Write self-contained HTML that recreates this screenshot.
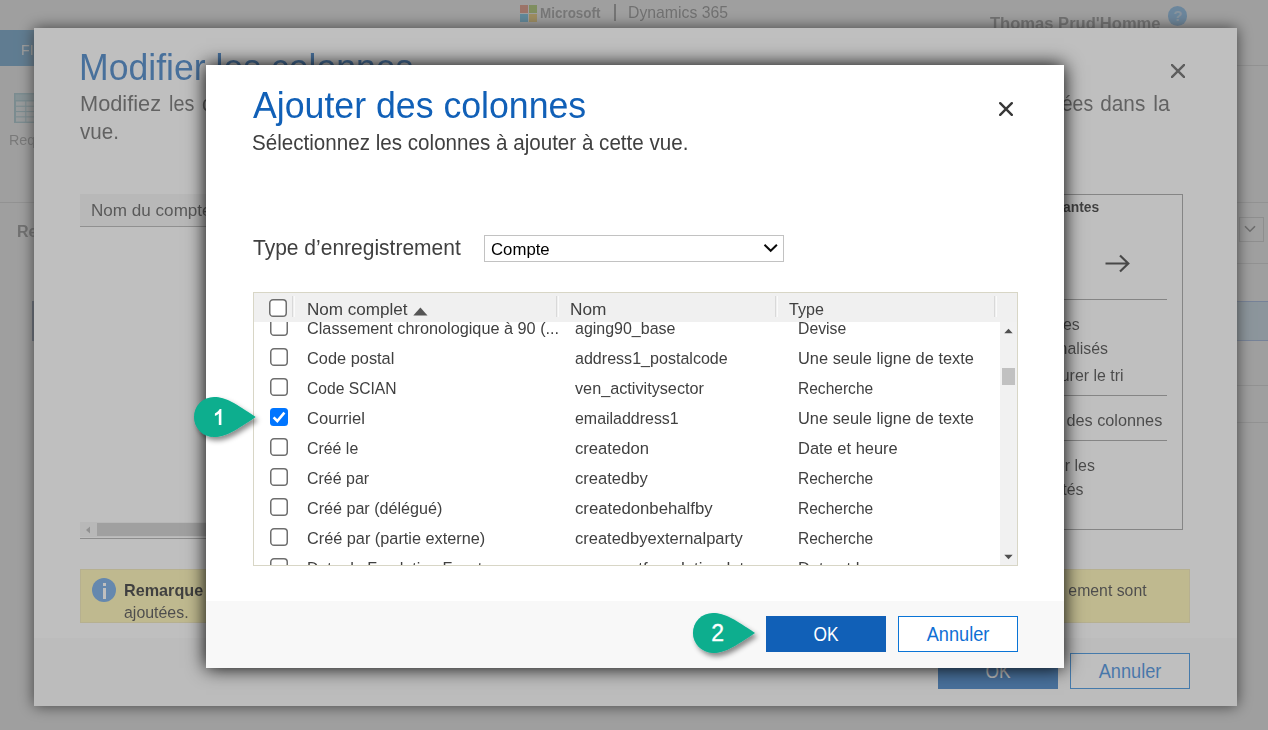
<!DOCTYPE html>
<html lang="fr"><head><meta charset="utf-8"><title>Ajouter des colonnes</title>
<style>
*{margin:0;padding:0;box-sizing:border-box}
html,body{width:1268px;height:730px;overflow:hidden;background:#fff}
body{position:relative;font-family:"Liberation Sans",sans-serif;}
.a{position:absolute}
.t{position:absolute;white-space:nowrap;line-height:1;font-family:"Liberation Sans",sans-serif}
.ov{position:absolute;left:0;top:0;width:1268px;height:730px;background:rgba(128,128,128,.5)}
.ln{position:absolute;height:1px;background:#c8c8c8}
#m1{position:absolute;left:34px;top:28px;width:1203px;height:677.5px;background:#fff;box-shadow:0 0 14px rgba(0,0,0,1)}
#m2{position:absolute;left:206px;top:65px;width:858px;height:602.8px;background:#fff;box-shadow:0 0 18px rgba(0,0,0,1)}
.ft{position:absolute;left:0;bottom:0;width:100%;background:#f8f8f8}
.cb{position:absolute;width:18px;height:18px;border:1.4px solid #767676;border-radius:3.5px;background:#fff}
.cb.on{border:none;background:#0075ff}
.cb svg{display:block}
.btn{position:absolute;height:36px;width:120px}
.btn.p{background:#1160b7}
.btn.s{background:#fff;border:1px solid #0a74d6}
.sep{position:absolute;width:3px;border-left:1px solid #d9d9d9;border-right:1px solid #fafafa;top:296px;height:21px}

</style></head>
<body>
<!-- ================= base page ================= -->
<div id="page">
  <div class="a" style="left:520px;top:4.5px;width:8px;height:8px;background:#f25022"></div>
  <div class="a" style="left:529px;top:4.5px;width:8px;height:8px;background:#7fba00"></div>
  <div class="a" style="left:520px;top:13.5px;width:8px;height:8px;background:#00a4ef"></div>
  <div class="a" style="left:529px;top:13.5px;width:8px;height:8px;background:#ffb900"></div>
  <div class="a" style="left:614px;top:4px;width:1.6px;height:17px;background:#555"></div>
  <div class="a" style="left:1168.2px;top:6.4px;width:19.2px;height:19.2px;border-radius:50%;background:#2f9bf5;color:#9fd0fa;font-weight:700;font-size:15px;line-height:19.2px;text-align:center">?</div>
  <div class="a" style="left:0;top:30px;width:92px;height:36px;background:#0072c6"></div>
  <div class="ln" style="left:92px;top:65px;width:1176px"></div>
  <div class="ln" style="left:0;top:201.5px;width:1268px"></div>
  <svg class="a" style="left:13.5px;top:92.5px" width="34" height="30" viewBox="0 0 34 30"><rect x="0" y="0" width="34" height="30" fill="#6fb4c4"/><rect x="1.5" y="1.5" width="31" height="5.5" fill="#9ccfdb"/><rect x="2" y="8.5" width="9.3" height="4.2" fill="#e4f1f4"/><rect x="12.3" y="8.5" width="9.3" height="4.2" fill="#e4f1f4"/><rect x="22.6" y="8.5" width="9.3" height="4.2" fill="#e4f1f4"/><rect x="2" y="13.8" width="9.3" height="4.2" fill="#e4f1f4"/><rect x="12.3" y="13.8" width="9.3" height="4.2" fill="#e4f1f4"/><rect x="22.6" y="13.8" width="9.3" height="4.2" fill="#e4f1f4"/><rect x="2" y="19.1" width="9.3" height="4.2" fill="#e4f1f4"/><rect x="12.3" y="19.1" width="9.3" height="4.2" fill="#e4f1f4"/><rect x="22.6" y="19.1" width="9.3" height="4.2" fill="#e4f1f4"/><rect x="2" y="24.4" width="9.3" height="4.2" fill="#e4f1f4"/><rect x="12.3" y="24.4" width="9.3" height="4.2" fill="#e4f1f4"/><rect x="22.6" y="24.4" width="9.3" height="4.2" fill="#e4f1f4"/></svg>
  <div class="a" style="left:32px;top:301px;width:1236px;height:40px;background:#b1d6f0;border-top:1px solid #5a8ae0;border-bottom:1px solid #5a8ae0"></div>
  <div class="a" style="left:32px;top:301px;width:2px;height:39.6px;background:#1f3a6e"></div>
  <div class="a" style="left:1238.5px;top:216.5px;width:25px;height:25.3px;border:1px solid #bbb;background:#fff"></div>
  <svg class="a" style="left:1243.8px;top:225px" width="12" height="8" viewBox="0 0 12 8"><path d="M1 1.2L6 6.2L11 1.2" fill="none" stroke="#333" stroke-width="1.6"/></svg>
  <div class="ln" style="left:1200px;top:263px;width:68px"></div>
  <div class="ln" style="left:1200px;top:385px;width:68px"></div>
  <div class="ln" style="left:1200px;top:422px;width:68px"></div>
<span class="t" id="t0" style="top:4px;line-height:17px;font-size:15px;color:#5e5e5e;font-weight:700;left:540.06px;transform-origin:0 0;transform:scaleX(0.8960);">Microsoft</span>
<span class="t" id="t1" style="top:3px;line-height:19px;font-size:16.6px;color:#444;left:628.13px;transform-origin:0 0;transform:scaleX(0.9511);">Dynamics 365</span>
<span class="t" id="t2" style="top:13px;line-height:20px;font-size:17.4px;color:#444;font-weight:700;left:989.69px;transform-origin:0 0;transform:scaleX(0.9527);">Thomas Prud'Homme</span>
<span class="t" id="t3" style="top:41px;line-height:17px;font-size:15.5px;color:#fff;left:21.41px;transform-origin:0 0;transform:scaleX(0.9250);">FICHIER</span>
<span class="t" id="t4" style="top:131px;line-height:17px;font-size:15.5px;color:#666;left:9.21px;transform-origin:0 0;transform:scaleX(0.9250);">Requête</span>
<span class="t" id="t5" style="top:221px;line-height:20px;font-size:17.4px;color:#444;font-weight:700;left:16.51px;transform-origin:0 0;transform:scaleX(0.9250);">Requête</span>
</div>
<div class="ov"></div>

<!-- ================= modal 1 : Modifier les colonnes ================= -->
<div id="m1"><div class="ft" style="height:68px"></div></div>
<svg class="a" style="left:1171px;top:64px" width="14" height="14" viewBox="0 0 14 14"><path d="M0.8 0.8L13.2 13.2M13.2 0.8L0.8 13.2" stroke="#3c3c3c" stroke-width="2.4" stroke-linecap="round" fill="none"/></svg>
<div class="a" style="left:80px;top:194px;width:400px;height:32.5px;background:#f0f0f0;border-bottom:1px solid #a0a0a0"></div>
<div class="a" style="left:80px;top:521.5px;width:400px;height:15px;background:#f1f1f1"></div>
<div class="ln" style="left:80px;top:538px;width:400px;background:#9a9a9a"></div>
<div class="a" style="left:97px;top:523px;width:300px;height:13px;background:#c1c1c1"></div>
<svg class="a" style="left:84.5px;top:525.5px" width="6" height="8" viewBox="0 0 6 8"><path d="M5 0.5L1 4L5 7.5Z" fill="#a3a3a3"/></svg>
<div class="a" style="left:80px;top:569px;width:1110px;height:53.7px;background:#fff29e;border:1px solid #ece0a0"></div>
<div class="a" style="left:92px;top:578.4px;width:24px;height:24px;border-radius:50%;background:#4a90dc"></div>
<div class="a" style="left:102.5px;top:582.5px;width:3px;height:3.2px;background:#fff"></div>
<div class="a" style="left:102.5px;top:587.5px;width:3px;height:11px;background:#fff"></div>
<div class="a" style="left:900px;top:194.4px;width:283px;height:335.3px;border:1px solid #8a8a8a"></div>
<svg class="a" style="left:1104.5px;top:253.5px" width="25" height="19" viewBox="0 0 25 19"><path d="M0.5 9.5H23M15 1.5L23.3 9.5L15 17.5" fill="none" stroke="#111" stroke-width="2.2"/></svg>
<div class="ln" style="left:920px;top:299px;width:247px;background:#8a8a8a"></div>
<div class="ln" style="left:920px;top:395px;width:247px;background:#8a8a8a"></div>
<div class="ln" style="left:920px;top:440px;width:247px;background:#8a8a8a"></div>
<div class="btn p" style="left:938px;top:653px"></div>
<div class="btn s" style="left:1070px;top:653px"></div>
<span class="t" id="t6" style="top:46px;line-height:42px;font-size:37.8px;color:#1160b7;left:79.34px;transform-origin:0 0;transform:scaleX(0.9418);">Modifier les colonnes</span>
<span class="t" id="t7" style="top:91px;line-height:25px;font-size:21.8px;color:#444;left:80.00px;transform-origin:0 0;transform:scaleX(0.9987);">Modifiez</span>
<span class="t" id="t8" style="top:91px;line-height:25px;font-size:21.8px;color:#444;left:168.91px;transform-origin:0 0;transform:scaleX(0.9068);">les</span>
<span class="t" id="t9" style="top:91px;line-height:25px;font-size:21.8px;color:#444;left:202.19px;transform-origin:0 0;transform:scaleX(0.9250);">colonnes</span>
<span class="t" id="t10" style="top:91px;line-height:25px;font-size:21.8px;color:#444;right:175.02px;transform-origin:100% 0;transform:scaleX(0.8916);">ées</span>
<span class="t" id="t11" style="top:91px;line-height:25px;font-size:21.8px;color:#444;right:123.17px;transform-origin:100% 0;transform:scaleX(0.9514);">dans</span>
<span class="t" id="t12" style="top:91px;line-height:25px;font-size:21.8px;color:#444;right:98.45px;transform-origin:100% 0;transform:scaleX(0.9800);">la</span>
<span class="t" id="t13" style="top:119px;line-height:25px;font-size:21.8px;color:#444;left:79.67px;transform-origin:0 0;transform:scaleX(0.9455);">vue.</span>
<span class="t" id="t14" style="top:200px;line-height:20px;font-size:17.4px;color:#333;left:91.36px;transform-origin:0 0;transform:scaleX(0.9826);">Nom du compte</span>
<span class="t" id="t15" style="top:198px;line-height:17px;font-size:15px;color:#000;font-weight:700;right:168.85px;transform-origin:100% 0;transform:scaleX(0.9250);">antes</span>
<span class="t" id="t16" style="top:314px;line-height:20px;font-size:17.2px;color:#161616;right:188.36px;transform-origin:100% 0;transform:scaleX(0.9250);">Filtres</span>
<span class="t" id="t17" style="top:338px;line-height:20px;font-size:17.2px;color:#161616;right:159.96px;transform-origin:100% 0;transform:scaleX(0.9250);">personnalisés</span>
<span class="t" id="t18" style="top:365px;line-height:20px;font-size:17.2px;color:#161616;right:144.36px;transform-origin:100% 0;transform:scaleX(0.9250);">Configurer le tri</span>
<span class="t" id="t19" style="top:410px;line-height:20px;font-size:17.2px;color:#161616;right:105.25px;transform-origin:100% 0;transform:scaleX(0.9462);">des colonnes</span>
<span class="t" id="t20" style="top:455px;line-height:20px;font-size:17.2px;color:#161616;right:173.06px;transform-origin:100% 0;transform:scaleX(0.9250);">Modifier les</span>
<span class="t" id="t21" style="top:479px;line-height:20px;font-size:17.2px;color:#161616;right:184.36px;transform-origin:100% 0;transform:scaleX(0.9250);">propriétés</span>
<span class="t" id="t22" style="top:581px;line-height:19px;font-size:17.1px;color:#000;font-weight:700;left:124.11px;transform-origin:0 0;transform:scaleX(0.9477);">Remarque</span>
<span class="t" id="t23" style="top:581px;line-height:19px;font-size:17.1px;color:#1a1a1a;right:121.87px;transform-origin:100% 0;transform:scaleX(0.9250);">ement sont</span>
<span class="t" id="t24" style="top:603px;line-height:19px;font-size:17.1px;color:#1a1a1a;left:124.12px;transform-origin:0 0;transform:scaleX(0.9311);">ajoutées.</span>
<span class="t" id="t25" style="top:660px;line-height:22px;font-size:19.4px;color:#fff;left:997.70px;transform-origin:50% 0;transform:translateX(-50%) scaleX(0.8935);">OK</span>
<span class="t" id="t26" style="top:660px;line-height:22px;font-size:19.4px;color:#0f6fd4;left:1130.00px;transform-origin:50% 0;transform:translateX(-50%) scaleX(0.9385);">Annuler</span>
<div class="ov"></div>

<!-- ================= modal 2 : Ajouter des colonnes ================= -->
<div id="m2"><div class="ft" style="height:67.2px"></div></div>
<svg class="a" style="left:999px;top:102px" width="14" height="14" viewBox="0 0 14 14"><path d="M1.2 1.2L12.8 12.8M12.8 1.2L1.2 12.8" stroke="#383838" stroke-width="2.4" stroke-linecap="round" fill="none"/></svg>
<div class="a" style="left:484px;top:235px;width:300px;height:27px;border:1px solid #c2c2c2;background:#fff"></div>
<svg class="a" style="left:762.5px;top:243px" width="16" height="10" viewBox="0 0 16 10"><path d="M1.5 1.8L7.7 7.8L13.9 1.8" fill="none" stroke="#0a0a0a" stroke-width="2"/></svg>
<!-- grid -->
<div class="a" style="left:253px;top:292px;width:765px;height:274px;border:1px solid #d8d6c6;background:#fff"></div>
<div class="a" style="left:254px;top:293px;width:763px;height:29px;background:#f0f0f0"></div>
<div class="sep" style="left:292px"></div><div class="sep" style="left:556px"></div><div class="sep" style="left:774.5px"></div><div class="sep" style="left:994px"></div>
<svg class="a" style="left:413px;top:306.5px" width="15" height="9" viewBox="0 0 15 9"><path d="M0.3 8.6L7.4 0.6L14.5 8.6Z" fill="#555"/></svg>
<svg class="a" style="left:269px;top:299px" width="18" height="18" viewBox="0 0 18 18"><rect x="0.75" y="0.75" width="16.5" height="16.5" rx="3.3" fill="#fff" stroke="#6e6e6e" stroke-width="1.5"/></svg>
<div class="a" id="rows" style="left:254px;top:322px;width:746px;height:243px;overflow:hidden">
 <div class="a" style="left:-254px;top:-322px;width:1268px;height:730px">
<svg class="a" style="left:270px;top:318px" width="18" height="18" viewBox="0 0 18 18"><rect x="0.75" y="0.75" width="16.5" height="16.5" rx="3.3" fill="#fff" stroke="#6e6e6e" stroke-width="1.5"/></svg>
<svg class="a" style="left:270px;top:348px" width="18" height="18" viewBox="0 0 18 18"><rect x="0.75" y="0.75" width="16.5" height="16.5" rx="3.3" fill="#fff" stroke="#6e6e6e" stroke-width="1.5"/></svg>
<svg class="a" style="left:270px;top:378px" width="18" height="18" viewBox="0 0 18 18"><rect x="0.75" y="0.75" width="16.5" height="16.5" rx="3.3" fill="#fff" stroke="#6e6e6e" stroke-width="1.5"/></svg>
<div class="cb on" style="left:270px;top:408px"><svg viewBox="0 0 18 18" width="18" height="18"><path d="M3.6 9.4 L7.3 13 L14.4 4.6" fill="none" stroke="#fff" stroke-width="2.6" stroke-linejoin="miter"/></svg></div>
<svg class="a" style="left:270px;top:438px" width="18" height="18" viewBox="0 0 18 18"><rect x="0.75" y="0.75" width="16.5" height="16.5" rx="3.3" fill="#fff" stroke="#6e6e6e" stroke-width="1.5"/></svg>
<svg class="a" style="left:270px;top:468px" width="18" height="18" viewBox="0 0 18 18"><rect x="0.75" y="0.75" width="16.5" height="16.5" rx="3.3" fill="#fff" stroke="#6e6e6e" stroke-width="1.5"/></svg>
<svg class="a" style="left:270px;top:498px" width="18" height="18" viewBox="0 0 18 18"><rect x="0.75" y="0.75" width="16.5" height="16.5" rx="3.3" fill="#fff" stroke="#6e6e6e" stroke-width="1.5"/></svg>
<svg class="a" style="left:270px;top:528px" width="18" height="18" viewBox="0 0 18 18"><rect x="0.75" y="0.75" width="16.5" height="16.5" rx="3.3" fill="#fff" stroke="#6e6e6e" stroke-width="1.5"/></svg>
<svg class="a" style="left:270px;top:558px" width="18" height="18" viewBox="0 0 18 18"><rect x="0.75" y="0.75" width="16.5" height="16.5" rx="3.3" fill="#fff" stroke="#6e6e6e" stroke-width="1.5"/></svg>
<span class="t" id="t36" style="top:318px;line-height:20px;font-size:17.2px;color:#404040;left:307.11px;transform-origin:0 0;transform:scaleX(0.9459);">Classement chronologique à 90 (...</span>
<span class="t" id="t37" style="top:318px;line-height:20px;font-size:17.2px;color:#404040;left:575.02px;transform-origin:0 0;transform:scaleX(0.9297);">aging90_base</span>
<span class="t" id="t38" style="top:318px;line-height:20px;font-size:17.2px;color:#404040;left:798.33px;transform-origin:0 0;transform:scaleX(0.9173);">Devise</span>
<span class="t" id="t39" style="top:348px;line-height:20px;font-size:17.2px;color:#404040;left:307.10px;transform-origin:0 0;transform:scaleX(0.9523);">Code postal</span>
<span class="t" id="t40" style="top:348px;line-height:20px;font-size:17.2px;color:#404040;left:575.02px;transform-origin:0 0;transform:scaleX(0.9346);">address1_postalcode</span>
<span class="t" id="t41" style="top:348px;line-height:20px;font-size:17.2px;color:#404040;left:798.30px;transform-origin:0 0;transform:scaleX(0.9541);">Une seule ligne de texte</span>
<span class="t" id="t42" style="top:378px;line-height:20px;font-size:17.2px;color:#404040;left:307.14px;transform-origin:0 0;transform:scaleX(0.9104);">Code SCIAN</span>
<span class="t" id="t43" style="top:378px;line-height:20px;font-size:17.2px;color:#404040;left:575.01px;transform-origin:0 0;transform:scaleX(0.9439);">ven_activitysector</span>
<span class="t" id="t44" style="top:378px;line-height:20px;font-size:17.2px;color:#404040;left:798.34px;transform-origin:0 0;transform:scaleX(0.9044);">Recherche</span>
<span class="t" id="t45" style="top:408px;line-height:20px;font-size:17.2px;color:#404040;left:307.09px;transform-origin:0 0;transform:scaleX(0.9615);">Courriel</span>
<span class="t" id="t46" style="top:408px;line-height:20px;font-size:17.2px;color:#404040;left:575.02px;transform-origin:0 0;transform:scaleX(0.9278);">emailaddress1</span>
<span class="t" id="t47" style="top:408px;line-height:20px;font-size:17.2px;color:#404040;left:798.30px;transform-origin:0 0;transform:scaleX(0.9541);">Une seule ligne de texte</span>
<span class="t" id="t48" style="top:438px;line-height:20px;font-size:17.2px;color:#404040;left:307.13px;transform-origin:0 0;transform:scaleX(0.9243);">Créé le</span>
<span class="t" id="t49" style="top:438px;line-height:20px;font-size:17.2px;color:#404040;left:574.98px;transform-origin:0 0;transform:scaleX(0.9677);">createdon</span>
<span class="t" id="t50" style="top:438px;line-height:20px;font-size:17.2px;color:#404040;left:798.29px;transform-origin:0 0;transform:scaleX(0.9578);">Date et heure</span>
<span class="t" id="t51" style="top:468px;line-height:20px;font-size:17.2px;color:#404040;left:307.12px;transform-origin:0 0;transform:scaleX(0.9289);">Créé par</span>
<span class="t" id="t52" style="top:468px;line-height:20px;font-size:17.2px;color:#404040;left:574.99px;transform-origin:0 0;transform:scaleX(0.9641);">createdby</span>
<span class="t" id="t53" style="top:468px;line-height:20px;font-size:17.2px;color:#404040;left:798.34px;transform-origin:0 0;transform:scaleX(0.9044);">Recherche</span>
<span class="t" id="t54" style="top:498px;line-height:20px;font-size:17.2px;color:#404040;left:307.11px;transform-origin:0 0;transform:scaleX(0.9381);">Créé par (délégué)</span>
<span class="t" id="t55" style="top:498px;line-height:20px;font-size:17.2px;color:#404040;left:574.98px;transform-origin:0 0;transform:scaleX(0.9728);">createdonbehalfby</span>
<span class="t" id="t56" style="top:498px;line-height:20px;font-size:17.2px;color:#404040;left:798.34px;transform-origin:0 0;transform:scaleX(0.9044);">Recherche</span>
<span class="t" id="t57" style="top:528px;line-height:20px;font-size:17.2px;color:#404040;left:307.10px;transform-origin:0 0;transform:scaleX(0.9471);">Créé par (partie externe)</span>
<span class="t" id="t58" style="top:528px;line-height:20px;font-size:17.2px;color:#404040;left:574.99px;transform-origin:0 0;transform:scaleX(0.9601);">createdbyexternalparty</span>
<span class="t" id="t59" style="top:528px;line-height:20px;font-size:17.2px;color:#404040;left:798.34px;transform-origin:0 0;transform:scaleX(0.9044);">Recherche</span>
<span class="t" id="t60" style="top:558px;line-height:20px;font-size:17.2px;color:#404040;left:307.12px;transform-origin:0 0;transform:scaleX(0.9263);">Date de Fondation Fonct...</span>
<span class="t" id="t61" style="top:558px;line-height:20px;font-size:17.2px;color:#404040;left:574.98px;transform-origin:0 0;transform:scaleX(0.9732);">ven_acntfoundationdate</span>
<span class="t" id="t62" style="top:558px;line-height:20px;font-size:17.2px;color:#404040;left:798.29px;transform-origin:0 0;transform:scaleX(0.9578);">Date et heure</span>
 </div>
</div>
<!-- vertical scrollbar -->
<div class="a" style="left:1000px;top:322px;width:17px;height:243px;background:#f1f1f1"></div>
<div class="a" style="left:1002px;top:368.3px;width:13px;height:16.7px;background:#c1c1c1"></div>
<svg class="a" style="left:1004px;top:328px" width="9" height="6" viewBox="0 0 9 6"><path d="M0.3 5.3L4.5 0.8L8.7 5.3Z" fill="#505050"/></svg>
<svg class="a" style="left:1004px;top:553.5px" width="9" height="6" viewBox="0 0 9 6"><path d="M0.3 0.7L4.5 5.2L8.7 0.7Z" fill="#505050"/></svg>
<div class="btn p" style="left:766px;top:616px"></div>
<div class="btn s" style="left:898px;top:616px"></div>
<span class="t" id="t27" style="top:84px;line-height:42px;font-size:37.8px;color:#1160b7;left:253.24px;transform-origin:0 0;transform:scaleX(0.9439);">Ajouter des colonnes</span>
<span class="t" id="t28" style="top:130px;line-height:25px;font-size:21.8px;color:#404040;left:252.47px;transform-origin:0 0;transform:scaleX(0.9454);">Sélectionnez les colonnes à ajouter à cette vue.</span>
<span class="t" id="t29" style="top:235px;line-height:25px;font-size:21.8px;color:#404040;left:252.74px;transform-origin:0 0;transform:scaleX(0.9635);">Type d’enregistrement</span>
<span class="t" id="t30" style="top:239px;line-height:20px;font-size:17.4px;color:#000;left:490.98px;transform-origin:0 0;transform:scaleX(0.9637);">Compte</span>
<span class="t" id="t31" style="top:299px;line-height:20px;font-size:17.2px;color:#404040;left:306.76px;transform-origin:0 0;transform:scaleX(0.9938);">Nom complet</span>
<span class="t" id="t32" style="top:299px;line-height:20px;font-size:17.2px;color:#404040;left:569.85px;transform-origin:0 0;transform:scaleX(1.0040);">Nom</span>
<span class="t" id="t33" style="top:299px;line-height:20px;font-size:17.2px;color:#404040;left:789.12px;transform-origin:0 0;transform:scaleX(0.9346);">Type</span>
<span class="t" id="t34" style="top:623px;line-height:22px;font-size:19.4px;color:#fff;left:825.70px;transform-origin:50% 0;transform:translateX(-50%) scaleX(0.8935);">OK</span>
<span class="t" id="t35" style="top:623px;line-height:22px;font-size:19.4px;color:#0f6fd4;left:958.00px;transform-origin:50% 0;transform:translateX(-50%) scaleX(0.9385);">Annuler</span>
<!-- markers -->
<svg class="a" style="left:0;top:0" width="1268" height="730" viewBox="0 0 1268 730"><defs><filter id="ds" x="-30%" y="-30%" width="170%" height="170%"><feDropShadow dx="2.5" dy="3.5" stdDeviation="2.5" flood-color="#000" flood-opacity=".45"/></filter></defs><path d="M214.00,397.00 C226.00,397.00 235.70,403.60 255.70,417.00 C235.70,430.40 226.00,437.00 214.00,437.00 A20.0 20.0 0 0 1 214.00,397.00 Z" fill="#08ae8e" filter="url(#ds)"/><path d="M712.90,612.90 C724.90,612.90 735.00,619.50 755.00,632.90 C735.00,646.30 724.90,652.90 712.90,652.90 A20.0 20.0 0 0 1 712.90,612.90 Z" fill="#08ae8e" filter="url(#ds)"/><path d="M221.4,424.9 V409.1 H219.7 C218.9,411 216.9,412.6 214.9,413.4 V415.9 C216.5,415.4 218,414.5 218.8,413.7 V424.9 Z" fill="#fff"/></svg>
<span class="t" id="t63" style="top:620px;line-height:26px;font-size:23px;color:#fff;-webkit-text-stroke:0.35px #fff;left:717.60px;transform-origin:50% 0;transform:translateX(-50%) scaleX(1.0000);">2</span>

</body></html>
